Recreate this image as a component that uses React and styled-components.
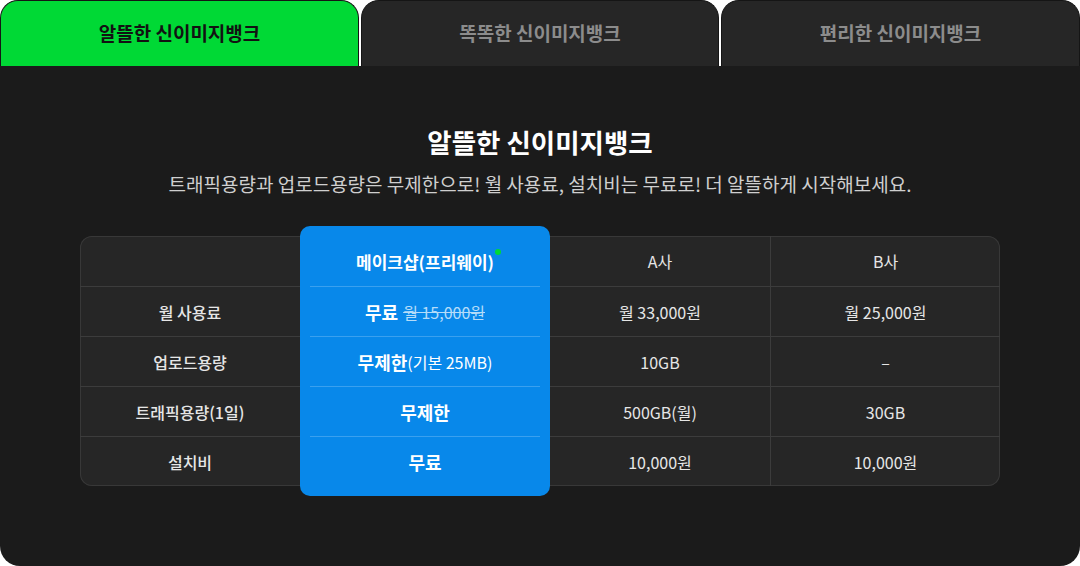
import React from "react";
import styled, { createGlobalStyle } from "styled-components";

const GlobalStyle = createGlobalStyle`
  body {
    margin: 0;
    background: #ffffff;
    font-family: "Noto Sans CJK KR", "Noto Sans", sans-serif;
  }
`;

const Wrapper = styled.div`
  width: 1080px;
  height: 566px;
  display: flex;
  flex-direction: column;
`;

const Tabs = styled.div`
  display: grid;
  grid-template-columns: 359px 358px 1fr;
  gap: 2px;
  height: 66px;
`;

const Tab = styled.div`
  display: flex;
  align-items: center;
  justify-content: center;
  border: 1px solid #151515;
  border-bottom: none;
  border-radius: 18px 18px 0 0;
  background: ${(props) => (props.active ? "#00d935" : "#262626")};
  color: ${(props) => (props.active ? "#121212" : "#8c8c8c")};
  font-size: 19px;
  font-weight: 700;
  padding-bottom: 2px;
`;

const Panel = styled.div`
  flex: 1;
  background: #1b1b1b;
  border-radius: 0 0 20px 20px;
  display: flex;
  flex-direction: column;
  align-items: center;
  padding-top: 58px;
`;

const Title = styled.h2`
  margin: 0;
  color: #ffffff;
  font-size: 26.5px;
  font-weight: 700;
  line-height: 36px;
`;

const Subtitle = styled.p`
  margin: 10px 0 0;
  color: #cfcfcf;
  font-size: 19px;
  line-height: 28px;
`;

const Table = styled.div`
  margin-top: 38px;
  width: 920px;
  display: grid;
  grid-template-columns: 220px 250px 220px 1fr;
  background: #262626;
  box-shadow: inset 0 0 0 1px #383838;
  border-radius: 12px;
`;

const Column = styled.div`
  display: flex;
  flex-direction: column;
  border-left: ${(props) => (props.divider ? "1px solid #3c3c3c" : "none")};
`;

const Cell = styled.div`
  height: 50px;
  display: flex;
  align-items: center;
  justify-content: center;
  color: #e6e6e6;
  font-size: 16px;
  font-weight: ${(props) => (props.bold ? 500 : 400)};
  box-sizing: border-box;
  border-top: ${(props) => (props.first ? "none" : "1px solid #3c3c3c")};
`;

const Highlight = styled.div`
  margin: -10px 0;
  background: #0888ea;
  border-radius: 10px;
  padding: 10px 10px;
  display: flex;
  flex-direction: column;
  position: relative;
  z-index: 1;
`;

const HCell = styled.div`
  height: 50px;
  display: flex;
  align-items: center;
  justify-content: center;
  gap: 5px;
  color: #ffffff;
  font-size: ${(props) => (props.small ? "17px" : "18px")};
  font-weight: 700;
  box-sizing: border-box;
  border-top: ${(props) => (props.first ? "none" : "1px solid #3aa0ef")};
`;

const Brand = styled.span`
  position: relative;
`;

const Dot = styled.span`
  position: absolute;
  top: 0px;
  right: -7px;
  width: 6px;
  height: 6px;
  border-radius: 50%;
  background: #00d935;
`;

const Strike = styled.span`
  font-size: 16px;
  font-weight: 400;
  color: #b5dcf9;
  text-decoration: line-through;
`;

const Note = styled.span`
  font-size: 16px;
  font-weight: 400;
  margin-left: -5px;
`;

const labels = ["", "월 사용료", "업로드용량", "트래픽용량(1일)", "설치비"];
const companyA = ["A사", "월 33,000원", "10GB", "500GB(월)", "10,000원"];
const companyB = ["B사", "월 25,000원", "–", "30GB", "10,000원"];

const App = () => {
  return (
    <>
      <GlobalStyle />
      <Wrapper>
        <Tabs>
          <Tab active>알뜰한 신이미지뱅크</Tab>
          <Tab>똑똑한 신이미지뱅크</Tab>
          <Tab>편리한 신이미지뱅크</Tab>
        </Tabs>
        <Panel>
          <Title>알뜰한 신이미지뱅크</Title>
          <Subtitle>
            트래픽용량과 업로드용량은 무제한으로! 월 사용료, 설치비는 무료로! 더
            알뜰하게 시작해보세요.
          </Subtitle>
          <Table>
            <Column>
              {labels.map((l, i) => (
                <Cell key={i} first={i === 0} bold>
                  {l}
                </Cell>
              ))}
            </Column>
            <Highlight>
              <HCell first small>
                <Brand>
                  메이크샵(프리웨이)
                  <Dot />
                </Brand>
              </HCell>
              <HCell>
                무료 <Strike>월 15,000원</Strike>
              </HCell>
              <HCell>
                무제한<Note>(기본 25MB)</Note>
              </HCell>
              <HCell>무제한</HCell>
              <HCell>무료</HCell>
            </Highlight>
            <Column>
              {companyA.map((v, i) => (
                <Cell key={i} first={i === 0}>
                  {v}
                </Cell>
              ))}
            </Column>
            <Column divider>
              {companyB.map((v, i) => (
                <Cell key={i} first={i === 0}>
                  {v}
                </Cell>
              ))}
            </Column>
          </Table>
        </Panel>
      </Wrapper>
    </>
  );
};

export default App;
